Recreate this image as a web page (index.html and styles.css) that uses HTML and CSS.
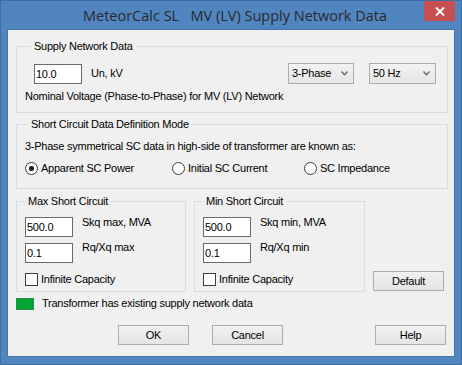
FILE: index.html
```html
<!DOCTYPE html>
<html>
<head>
<meta charset="utf-8">
<title>MeteorCalc SL MV (LV) Supply Network Data</title>
<link rel="stylesheet" href="styles.css">
</head>
<body>
<div class="window">
  <div class="titlebar">
    <span class="title">MeteorCalc SL&nbsp;&nbsp;&nbsp;MV (LV) Supply Network Data</span>
    <div class="close">
      <svg width="10" height="9" viewBox="0 0 10 9"><path d="M1 0.5 L9 8.5 M9 0.5 L1 8.5" stroke="#fff" stroke-width="2"/></svg>
    </div>
  </div>
  <div class="client">
    <fieldset class="group g1">
      <legend>Supply Network Data</legend>
      <div class="row1">
        <div class="edit">10.0</div>
        <span class="unit">Un, kV</span>
        <div class="combo c1"><span>3-Phase</span><svg width="7" height="5" viewBox="0 0 7 5"><path d="M0.5 0.5 L3.5 3.8 L6.5 0.5" fill="none" stroke="#666" stroke-width="1.3"/></svg></div>
        <div class="combo c2"><span>50 Hz</span><svg width="7" height="5" viewBox="0 0 7 5"><path d="M0.5 0.5 L3.5 3.8 L6.5 0.5" fill="none" stroke="#666" stroke-width="1.3"/></svg></div>
      </div>
      <div class="note">Nominal Voltage (Phase-to-Phase) for MV (LV) Network</div>
    </fieldset>

    <fieldset class="group g2">
      <legend>Short Circuit Data Definition Mode</legend>
      <div class="desc">3-Phase symmetrical SC data in high-side of transformer are known as:</div>
      <div class="radios">
        <label class="opt"><span class="radio checked"></span>Apparent SC Power</label>
        <label class="opt"><span class="radio"></span>Initial SC Current</label>
        <label class="opt"><span class="radio"></span>SC Impedance</label>
      </div>
    </fieldset>

    <div class="scrow">
      <fieldset class="group sc smax">
        <legend>Max Short Circuit</legend>
        <div class="field"><div class="edit">500.0</div><span class="flabel">Skq max, MVA</span></div>
        <div class="field f2"><div class="edit">0.1</div><span class="flabel">Rq/Xq max</span></div>
        <label class="chk"><span class="box"></span>Infinite Capacity</label>
      </fieldset>
      <fieldset class="group sc smin">
        <legend>Min Short Circuit</legend>
        <div class="field"><div class="edit">500.0</div><span class="flabel">Skq min, MVA</span></div>
        <div class="field f2"><div class="edit">0.1</div><span class="flabel">Rq/Xq min</span></div>
        <label class="chk"><span class="box"></span>Infinite Capacity</label>
      </fieldset>
      <div class="btn default">Default</div>
    </div>

    <div class="status">
      <span class="swatch"></span>
      <span>Transformer has existing supply network data</span>
    </div>

    <div class="buttons">
      <div class="btn">OK</div>
      <div class="btn">Cancel</div>
      <div class="btn help">Help</div>
    </div>
  </div>
</div>
</body>
</html>
```

FILE: styles.css
```css
* { box-sizing: border-box; }
html, body { margin: 0; padding: 0; }
body {
  width: 462px;
  height: 365px;
  overflow: hidden;
  background: #5085c0;
  font-family: "Liberation Sans", Arial, sans-serif;
  font-size: 11px;
  line-height: 13px;
  letter-spacing: -0.25px;
  color: #000;
}
.window {
  position: relative;
  width: 462px;
  height: 365px;
  border: 1px solid #3f6ea3;
  display: flex;
  flex-direction: column;
}
.titlebar {
  height: 29px;
  display: flex;
  align-items: center;
  justify-content: center;
}
.title {
  font-family: "Open Sans", "Noto Sans", sans-serif;
  font-size: 14.5px;
  letter-spacing: 0;
  color: #2a2a2a;
  margin-left: 8px;
  margin-top: -1px;
}
.close {
  position: absolute;
  top: 0;
  right: 6px;
  width: 31px;
  height: 20px;
  background: #c75050;
  display: flex;
  align-items: center;
  justify-content: center;
}
.client {
  flex: 1;
  margin: 0 7px 8px 7px;
  background: #f0f0f0;
  box-shadow: 0 0 0 1px #4674a8;
  padding: 10px 0 0 8px;
  display: flex;
  flex-direction: column;
}
.group {
  margin: 0;
  padding: 0 8px;
  border: 1px solid #dcdcdc;
  min-width: 0;
}
.group legend {
  padding: 0 3px;
  line-height: 13px;
}
.g1 { width: 432px; height: 73px; padding-top: 10px; }
.g1 legend { margin-left: 6px; }
.row1 {
  display: flex;
  align-items: center;
  padding-left: 9px;
}
.edit {
  width: 48px;
  height: 20px;
  border: 1px solid #6a6a6a;
  background: #fff;
  padding: 0 1px;
  line-height: 18px;
}
.unit { margin-left: 9px; }
.combo {
  height: 21px;
  border: 1px solid #acacac;
  background: linear-gradient(#f2f2f2, #e6e6e6);
  display: flex;
  align-items: center;
  justify-content: space-between;
  padding: 0 5px 0 3px;
}
.c1 { width: 66px; margin-left: auto; }
.c2 { width: 67px; margin-left: 15px; margin-right: 3px; }
.note { margin-top: 6px; }

.g2 { width: 432px; height: 71px; margin-top: 5px; padding-top: 9px; }
.g2 legend { margin-left: 3px; }
.radios {
  display: grid;
  grid-template-columns: 147px 132px auto;
  margin-top: 9px;
}
.opt, .chk {
  display: flex;
  align-items: center;
  gap: 3px;
}
.radio {
  width: 13px;
  height: 13px;
  border-radius: 50%;
  border: 1px solid #3c3c3c;
  background: #fff;
  display: flex;
  align-items: center;
  justify-content: center;
}
.radio.checked::after {
  content: "";
  width: 5px;
  height: 5px;
  border-radius: 50%;
  background: #1a1a1a;
}

.scrow {
  display: flex;
  align-items: flex-end;
  margin-top: 6px;
}
.sc { height: 97px; padding-top: 9px; }
.sc legend { margin-left: 0; }
.smax { width: 170px; }
.smin { width: 171px; margin-left: 8px; }
.field { display: flex; align-items: flex-start; }
.flabel { margin-left: 9px; margin-top: -1px; }
.f2 { margin-top: 6px; }
.f2 .flabel { margin-top: -2px; }
.chk { margin-top: 10px; }
.box {
  width: 13px;
  height: 13px;
  border: 1px solid #3c3c3c;
  background: #fff;
}
.btn {
  width: 71px;
  height: 20px;
  border: 1px solid #acacac;
  background: linear-gradient(#f1f1f1, #e4e4e4);
  display: flex;
  align-items: center;
  justify-content: center;
}
.default { margin-left: 8px; margin-bottom: 1px; }

.status {
  display: flex;
  align-items: center;
  gap: 8px;
  margin-top: 5px;
}
.swatch {
  width: 18px;
  height: 12px;
  background: #00a83a;
  border: 1px solid #2f8a45;
}
.buttons {
  display: flex;
  margin-top: 15px;
  padding-left: 102px;
}
.buttons .btn + .btn { margin-left: 23px; }
.buttons .btn.help { margin-left: 92px; }
```
